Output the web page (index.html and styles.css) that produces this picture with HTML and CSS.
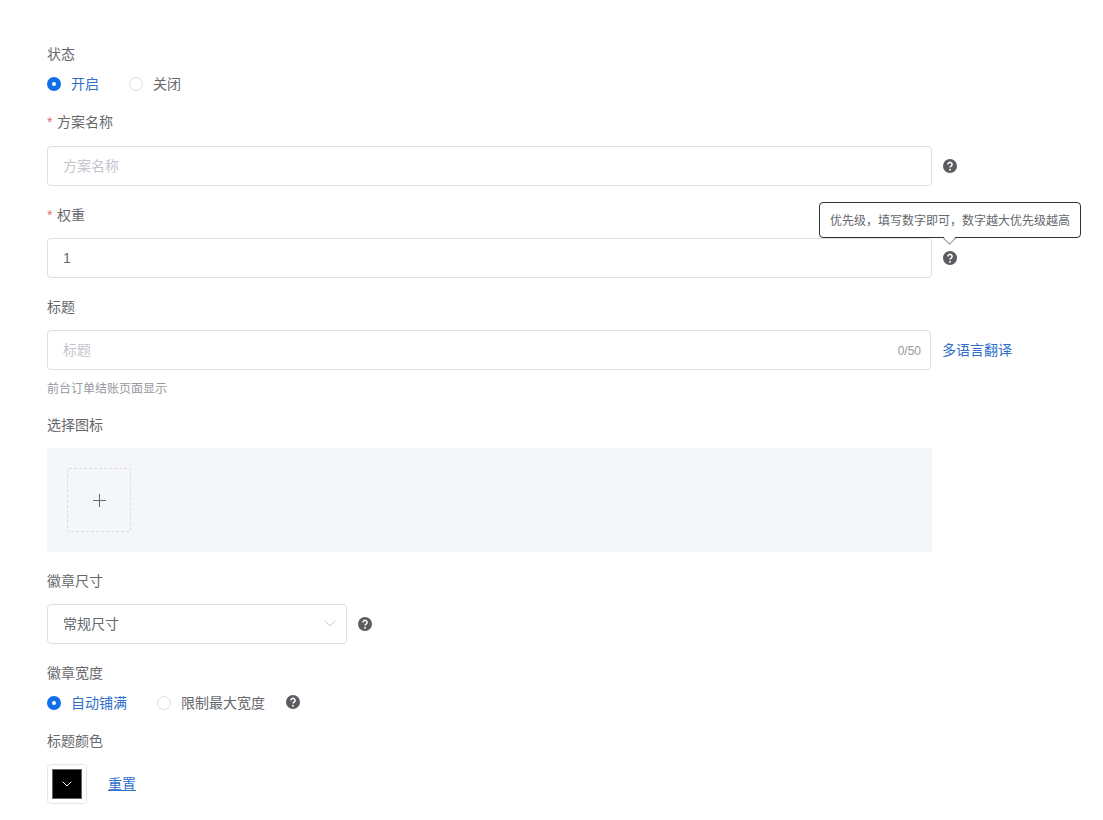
FILE: index.html
```html
<!DOCTYPE html>
<html lang="zh">
<head>
<meta charset="utf-8">
<title>方案</title>
<link rel="stylesheet" href="styles.css">
</head>
<body>
<form class="form">
  <div class="field status">
    <div class="label">状态</div>
    <div class="radios">
      <label class="radio on"><i class="dot"></i>开启</label>
      <label class="radio"><i class="dot"></i>关闭</label>
    </div>
  </div>
  <div class="field name">
    <div class="label"><span class="req">*</span>方案名称</div>
    <div class="row">
      <div class="input wide placeholder">方案名称</div>
      <svg class="help" viewBox="0 0 14 14"><circle cx="7" cy="7" r="7" fill="#5c5c60"/><path d="M4.9 5.4a2.1 2 0 1 1 3.2 1.7c-.7.45-1.1.8-1.1 1.5" fill="none" stroke="#fff" stroke-width="1.5"/><circle cx="7" cy="10.7" r=".95" fill="#fff"/></svg>
    </div>
  </div>
  <div class="field weight">
    <div class="label"><span class="req">*</span>权重</div>
    <div class="row">
      <div class="input wide">1</div>
      <svg class="help" viewBox="0 0 14 14"><circle cx="7" cy="7" r="7" fill="#5c5c60"/><path d="M4.9 5.4a2.1 2 0 1 1 3.2 1.7c-.7.45-1.1.8-1.1 1.5" fill="none" stroke="#fff" stroke-width="1.5"/><circle cx="7" cy="10.7" r=".95" fill="#fff"/></svg>
      <div class="tooltip">优先级，填写数字即可，数字越大优先级越高<span class="arrow"></span></div>
    </div>
  </div>
  <div class="field title">
    <div class="label">标题</div>
    <div class="row">
      <div class="input title-input placeholder">标题<span class="count">0/50</span></div>
      <a class="link translate">多语言翻译</a>
    </div>
    <div class="hint">前台订单结账页面显示</div>
  </div>
  <div class="field icon">
    <div class="label">选择图标</div>
    <div class="upload-box">
      <div class="upload"><svg class="plus" viewBox="0 0 13 13"><path d="M6.5 0v13M0 6.5h13" stroke="#66686d" stroke-width="1" fill="none"/></svg></div>
    </div>
  </div>
  <div class="field size">
    <div class="label">徽章尺寸</div>
    <div class="row">
      <div class="input select">常规尺寸<svg class="chev" viewBox="0 0 12 7"><path d="M.7.7 6 6l5.3-5.3" fill="none" stroke="#c9ccd2" stroke-width="1"/></svg></div>
      <svg class="help" viewBox="0 0 14 14"><circle cx="7" cy="7" r="7" fill="#5c5c60"/><path d="M4.9 5.4a2.1 2 0 1 1 3.2 1.7c-.7.45-1.1.8-1.1 1.5" fill="none" stroke="#fff" stroke-width="1.5"/><circle cx="7" cy="10.7" r=".95" fill="#fff"/></svg>
    </div>
  </div>
  <div class="field width">
    <div class="label">徽章宽度</div>
    <div class="radios">
      <label class="radio on"><i class="dot"></i>自动铺满</label>
      <label class="radio"><i class="dot"></i>限制最大宽度</label>
      <svg class="help inline" viewBox="0 0 14 14"><circle cx="7" cy="7" r="7" fill="#5c5c60"/><path d="M4.9 5.4a2.1 2 0 1 1 3.2 1.7c-.7.45-1.1.8-1.1 1.5" fill="none" stroke="#fff" stroke-width="1.5"/><circle cx="7" cy="10.7" r=".95" fill="#fff"/></svg>
    </div>
  </div>
  <div class="field color">
    <div class="label">标题颜色</div>
    <div class="row">
      <div class="swatch"><div class="swatch-fill"><svg class="swatch-chev" viewBox="0 0 10 6"><path d="M.7.7 5 5 9.3.7" fill="none" stroke="#fff" stroke-width="1"/></svg></div></div>
      <a class="link reset">重置</a>
    </div>
  </div>
</form>
</body>
</html>
```
FILE: styles.css
```css
* { box-sizing: border-box; }
html, body { margin: 0; background: #fff; }
body {
  height: 820px;
  overflow: hidden;
  font-family: "Liberation Sans", "Noto Sans CJK SC", sans-serif;
  font-size: 14px;
  line-height: 20px;
  color: #66686c;
}
.form { padding: 44px 0 0 47px; width: 1103px; }
.label { height: 20px; }
.req { color: #e0706b; display: inline-block; width: 10px; }
.row { display: flex; align-items: center; position: relative; }
.radios { display: flex; align-items: center; height: 20px; }
.radio { display: flex; align-items: flex-start; height: 20px; }
.dot {
  width: 14px; height: 14px; border-radius: 50%; margin-top: 3px;
  border: 1px solid #dcdfe4; background: #fff; margin-right: 10px;
}
.radio.on { color: #2f6fca; margin-right: 30px; }
.radio.on .dot { border: 5px solid #0f6fe8; }
.status .radios { margin-top: 10px; }
.name { margin-top: 18px; }
.name .label { margin-bottom: 14px; }
.weight .label, .title .label, .icon .label, .size .label { margin-bottom: 13px; }
.input {
  height: 40px; border: 1px solid #dcdfe4; border-radius: 4px;
  padding: 0 15px; line-height: 38px; color: #66686c; background: #fff; position: relative;
}
.wide { width: 885px; }
.title-input { width: 884px; }
.placeholder { color: #c3c6cc; }
.count { position: absolute; right: 9px; top: 0; font-size: 12px; line-height: 40px; color: #97999e; }
.help { width: 14px; height: 14px; margin-left: 11px; flex: none; }
.help.inline { margin-left: 21px; position: relative; top: -1px; }
.weight { margin-top: 19px; }
.title { margin-top: 19px; }
.link { color: #2f6fca; }
.translate { margin-left: 11px; }
.hint { font-size: 12px; color: #97999e; line-height: 16px; height: 16px; margin-top: 11px; }
.icon { margin-top: 18px; }
.upload-box { width: 885px; height: 104px; background: #f5f6fa; padding: 20px; }
.upload {
  width: 64px; height: 64px; border: 1px dashed #d9dbe0; border-radius: 2px;
  display: flex; align-items: center; justify-content: center;
}
.plus { width: 13px; height: 13px; }
.size { margin-top: 19px; }
.select { width: 300px; }
.chev { position: absolute; right: 10px; top: 15px; width: 12px; height: 7px; }
.width { margin-top: 19px; }
.width .radios { margin-top: 10px; }
.color { margin-top: 18px; }
.color .label { margin-bottom: 13px; }
.swatch { width: 40px; height: 40px; border: 1px solid #e4e6ea; border-radius: 4px; padding: 4px; }
.swatch-fill {
  width: 30px; height: 30px; background: #000; border: 1px solid #666;
  display: flex; align-items: center; justify-content: center;
}
.swatch-chev { width: 10px; height: 6px; }
.reset { margin-left: 21px; text-decoration: underline; }
.tooltip {
  position: absolute; left: 772px; top: -36px; height: 36px; width: 262px;
  border: 1px solid #303133; border-radius: 4px; background: #fff;
  font-size: 12px; line-height: 37px; text-align: center; color: #66686c; white-space: nowrap;
}
.arrow {
  position: absolute; left: 125px; bottom: -6px; width: 9px; height: 9px;
  background: #fff; border-right: 1px solid #8a8c90; border-bottom: 1px solid #8a8c90;
  transform: rotate(45deg);
}
```
